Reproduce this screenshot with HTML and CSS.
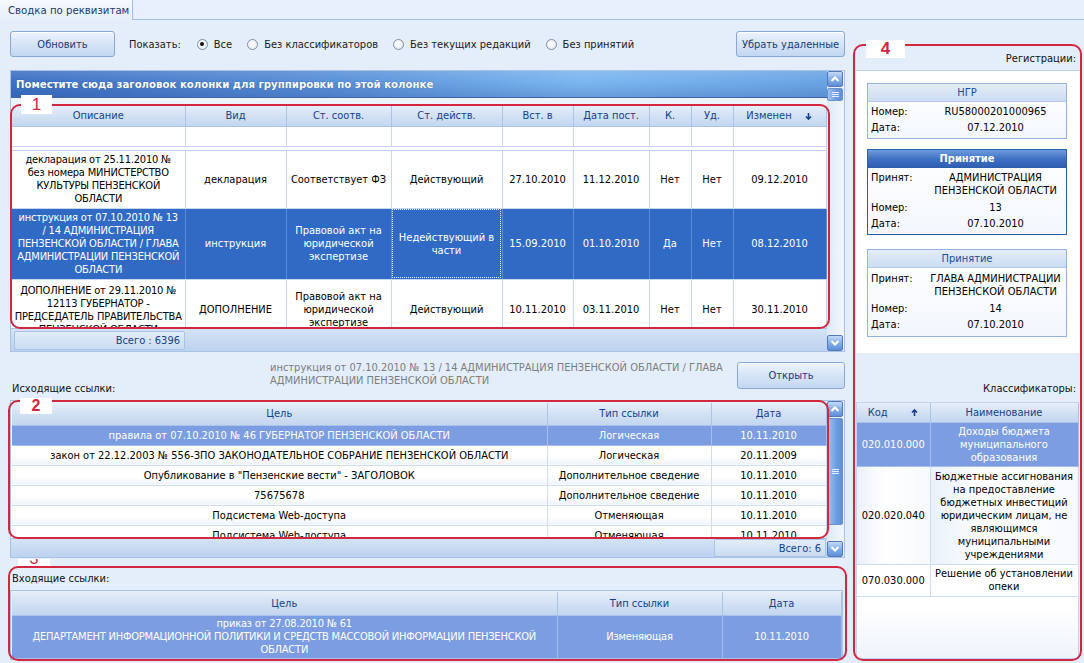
FILE: index.html
```html
<!DOCTYPE html>
<html lang="ru">
<head>
<meta charset="utf-8">
<title>Сводка по реквизитам</title>
<link rel="stylesheet" href="styles.css">
</head>
<body>
<div class="tabs"><div class="tab">Сводка по реквизитам</div></div>
<div class="page">
  <div class="left">
    <div class="toolbar">
      <button class="btn btn-refresh">Обновить</button>
      <span class="show-label">Показать:</span>
      <label class="radio"><span class="rb on"></span>Все</label>
      <label class="radio"><span class="rb"></span>Без классификаторов</label>
      <label class="radio"><span class="rb"></span>Без текущих редакций</label>
      <label class="radio"><span class="rb"></span>Без принятий</label>
      <button class="btn btn-remove">Убрать удаленные</button>
    </div>

    <div class="grid grid1">
      <div class="gmain">
        <div class="group-panel">Поместите сюда заголовок колонки для группировки по этой колонке</div>
        <div class="gap8"></div>
        <div class="viewport v1">
          <table class="tbl t1">
            <colgroup><col class="c1"><col class="c2"><col class="c3"><col class="c4"><col class="c5"><col class="c6"><col class="c7"><col class="c8"><col class="c9"></colgroup>
            <tr class="hdr"><th>Описание</th><th>Вид</th><th>Ст. соотв.</th><th>Ст. действ.</th><th>Вст. в</th><th>Дата пост.</th><th>К.</th><th>Уд.</th><th><span class="sort-h">Изменен<svg class="sort-ic" width="9" height="9" viewBox="0 0 9 9"><path d="M4.5 1v6M2 4.5l2.5 2.5 2.5-2.5" fill="none" stroke="#15428b" stroke-width="1.6"/></svg></span></th></tr>
            <tr class="filter"><td></td><td></td><td></td><td></td><td></td><td></td><td></td><td></td><td></td></tr>
            <tr class="sep"><td colspan="9"></td></tr>
            <tr class="r1"><td class="desc">декларация от 25.11.2010 №<br>без номера МИНИСТЕРСТВО<br>КУЛЬТУРЫ ПЕНЗЕНСКОЙ<br>ОБЛАСТИ</td><td>декларация</td><td>Соответствует ФЗ</td><td>Действующий</td><td>27.10.2010</td><td>11.12.2010</td><td>Нет</td><td>Нет</td><td>09.12.2010</td></tr>
            <tr class="r2 sel"><td class="desc">инструкция от 07.10.2010 № 13<br>/ 14 АДМИНИСТРАЦИЯ<br>ПЕНЗЕНСКОЙ ОБЛАСТИ / ГЛАВА<br>АДМИНИСТРАЦИИ ПЕНЗЕНСКОЙ<br>ОБЛАСТИ</td><td>инструкция</td><td>Правовой акт на юридической экспертизе</td><td class="focus">Недействующий в части</td><td>15.09.2010</td><td>01.10.2010</td><td>Да</td><td>Нет</td><td>08.12.2010</td></tr>
            <tr class="r3"><td class="desc">ДОПОЛНЕНИЕ от 29.11.2010 №<br>12113 ГУБЕРНАТОР -<br>ПРЕДСЕДАТЕЛЬ ПРАВИТЕЛЬСТВА<br>ПЕНЗЕНСКОЙ ОБЛАСТИ</td><td>ДОПОЛНЕНИЕ</td><td>Правовой акт на юридической экспертизе</td><td>Действующий</td><td>10.11.2010</td><td>03.11.2010</td><td>Нет</td><td>Нет</td><td>30.11.2010</td></tr>
          </table>
        </div>
        <div class="gfooter f1"><div class="total t-left">Всего : 6396</div></div>
      </div>
      <div class="vscroll s1">
        <div class="sbtn"><svg width="14" height="14" viewBox="0 0 14 14"><path d="M3.5 9l3.5-3.5 3.5 3.5" fill="none" stroke="#fff" stroke-width="2"/></svg></div>
        <div class="thumb small"><span class="grip"></span></div>
        <div class="track"></div>
        <div class="sbtn"><svg width="14" height="14" viewBox="0 0 14 14"><path d="M3.5 5l3.5 3.5 3.5-3.5" fill="none" stroke="#fff" stroke-width="2"/></svg></div>
      </div>
    </div>

    <div class="info-row">
      <div class="out-label">Исходящие ссылки:</div>
      <div class="info-text">инструкция от 07.10.2010 № 13 / 14 АДМИНИСТРАЦИЯ ПЕНЗЕНСКОЙ ОБЛАСТИ / ГЛАВА АДМИНИСТРАЦИИ ПЕНЗЕНСКОЙ ОБЛАСТИ</div>
      <button class="btn btn-open">Открыть</button>
    </div>

    <div class="grid grid2">
      <div class="gmain">
        <div class="viewport v2">
          <table class="tbl t2">
            <colgroup><col class="d1"><col class="d2"><col class="d3"></colgroup>
            <tr class="hdr"><th>Цель</th><th>Тип ссылки</th><th>Дата</th></tr>
            <tr class="lsel"><td>правила от 07.10.2010 № 46 ГУБЕРНАТОР ПЕНЗЕНСКОЙ ОБЛАСТИ</td><td>Логическая</td><td>10.11.2010</td></tr>
            <tr class="lr"><td>закон от 22.12.2003 № 556-ЗПО ЗАКОНОДАТЕЛЬНОЕ СОБРАНИЕ ПЕНЗЕНСКОЙ ОБЛАСТИ</td><td>Логическая</td><td>20.11.2009</td></tr>
            <tr class="lr"><td>Опубликование в "Пензенские вести" - ЗАГОЛОВОК</td><td>Дополнительное сведение</td><td>10.11.2010</td></tr>
            <tr class="lr"><td>75675678</td><td>Дополнительное сведение</td><td>10.11.2010</td></tr>
            <tr class="lr"><td>Подсистема Web-доступа</td><td>Отменяющая</td><td>10.11.2010</td></tr>
            <tr class="lr"><td>Подсистема Web-доступа</td><td>Отменяющая</td><td>10.11.2010</td></tr>
          </table>
        </div>
        <div class="gfooter f2"><div class="total t-right">Всего: 6</div></div>
      </div>
      <div class="vscroll s2">
        <div class="sbtn"><svg width="14" height="14" viewBox="0 0 14 14"><path d="M3.5 9l3.5-3.5 3.5 3.5" fill="none" stroke="#fff" stroke-width="2"/></svg></div>
        <div class="thumb big"><span class="grip"></span></div>
        <div class="track"></div>
        <div class="sbtn"><svg width="14" height="14" viewBox="0 0 14 14"><path d="M3.5 5l3.5 3.5 3.5-3.5" fill="none" stroke="#fff" stroke-width="2"/></svg></div>
      </div>
    </div>

    <div class="sec3">
      <div class="in-label">Входящие ссылки:</div>
      <div class="grid3">
        <table class="tbl t3">
          <colgroup><col class="e1"><col class="e2"><col class="e3"></colgroup>
          <tr class="hdr"><th>Цель</th><th>Тип ссылки</th><th>Дата</th></tr>
          <tr class="lsel tall"><td>приказ от 27.08.2010 № 61<br>ДЕПАРТАМЕНТ ИНФОРМАЦИОННОЙ ПОЛИТИКИ И СРЕДСТВ МАССОВОЙ ИНФОРМАЦИИ ПЕНЗЕНСКОЙ ОБЛАСТИ</td><td>Изменяющая</td><td>10.11.2010</td></tr>
        </table>
      </div>
    </div>
  </div>

  <div class="right">
    <div class="reg-title">Регистрации:</div>
    <div class="reg-area">
      <div class="card">
        <div class="card-h">НГР</div>
        <div class="card-b">
          <div class="kv"><span class="k">Номер:</span><span class="v">RU58000201000965</span></div>
          <div class="kv"><span class="k">Дата:</span><span class="v">07.12.2010</span></div>
        </div>
      </div>
      <div class="card active">
        <div class="card-h">Принятие</div>
        <div class="card-b">
          <div class="kv two"><span class="k">Принят:</span><span class="v">АДМИНИСТРАЦИЯ ПЕНЗЕНСКОЙ ОБЛАСТИ</span></div>
          <div class="kv"><span class="k">Номер:</span><span class="v">13</span></div>
          <div class="kv"><span class="k">Дата:</span><span class="v">07.10.2010</span></div>
        </div>
      </div>
      <div class="card c3">
        <div class="card-h">Принятие</div>
        <div class="card-b">
          <div class="kv two"><span class="k">Принят:</span><span class="v">ГЛАВА АДМИНИСТРАЦИИ ПЕНЗЕНСКОЙ ОБЛАСТИ</span></div>
          <div class="kv"><span class="k">Номер:</span><span class="v">14</span></div>
          <div class="kv"><span class="k">Дата:</span><span class="v">07.10.2010</span></div>
        </div>
      </div>
    </div>
    <div class="cls-title">Классификаторы:</div>
    <div class="cls-grid">
      <table class="tbl t4">
        <colgroup><col class="k1"><col class="k2"></colgroup>
        <tr class="hdr"><th><span class="sort-h">Код<svg class="sort-ic up" width="9" height="9" viewBox="0 0 9 9"><path d="M4.5 8V2M2 4.5l2.5-2.5 2.5 2.5" fill="none" stroke="#15428b" stroke-width="1.6"/></svg></span></th><th>Наименование</th></tr>
        <tr class="lsel kr1"><td>020.010.000</td><td>Доходы бюджета муниципального образования</td></tr>
        <tr class="kr2"><td>020.020.040</td><td>Бюджетные ассигнования на предоставление бюджетных инвестиций юридическим лицам, не являющимся муниципальными учреждениями</td></tr>
        <tr class="kr3"><td>070.030.000</td><td>Решение об установлении опеки</td></tr>
      </table>
    </div>
  </div>
</div>

<div class="ann a1"></div>
<div class="ann a2"></div>
<div class="ann a3"></div>
<div class="ann a4"></div>
<div class="lbl l1">1</div>
<div class="lbl l2">2</div>
<div class="lbl l3"><span>3</span></div>
<div class="lbl l4">4</div>
</body>
</html>
```
FILE: styles.css
```css
* { box-sizing: border-box; }
html, body { margin: 0; padding: 0; }
body {
  width: 1084px; height: 663px; overflow: hidden; position: relative;
  background: #e4eefa;
  font-family: "DejaVu Sans Condensed", "DejaVu Sans", "Liberation Sans", sans-serif;
  font-stretch: condensed;
  font-size: 11px; color: #000;
}
.tabs { height: 20px; border-bottom: 1px solid #a5bfe3; background: #e8f0fb; display: flex; }
.tab {
  width: 133px; height: 20px; padding: 4px 0 0 8px;
  background: linear-gradient(#f6f9fd, #e6effa);
  border-right: 1px solid #a5bfe3; color: #1b3a6e; font-size: 11.3px;
}
.page { display: flex; }
.left { margin-left: 10px; width: 835px; }

/* toolbar */
.toolbar { display: flex; align-items: center; height: 26px; margin-top: 11px; }
.btn {
  height: 26px; border: 1px solid #8ba8d2; border-radius: 3px;
  background: linear-gradient(#edf4fd, #d6e4f7 50%, #c3d7f2);
  color: #1c3a78; font-family: inherit; font-stretch: condensed; font-size: 11px; padding: 0;
  box-shadow: inset 0 1px 0 #fff;
}
.btn-refresh { width: 105px; }
.btn-remove { width: 109px; margin-left: auto; }
.btn-open { width: 108px; height: 27px; margin-top: 1px; }
.show-label { margin-left: 14px; color: #1a1a1a; }
.radio { display: flex; align-items: center; margin-left: 15px; color: #1a1a1a; }
.radio:first-of-type { margin-left: 16px; }
.rb {
  width: 11px; height: 11px; border-radius: 50%; border: 1px solid #7d8ea8;
  background: radial-gradient(circle at 40% 40%, #fff, #dfe6ef);
  margin-right: 6px; position: relative;
}
.rb.on::after {
  content: ""; position: absolute; left: 2.5px; top: 2.5px; width: 4px; height: 4px;
  border-radius: 50%; background: #111;
}

/* grids */
.grid { display: flex; border: 1px solid #a9c3e6; background: #eaf2fc; }
.grid1 { margin-top: 13px; height: 282px; }
.gmain { width: 816px; display: flex; flex-direction: column; }
.group-panel {
  height: 27px; line-height: 27px; padding-left: 5px;
  color: #fff; font-weight: bold; font-size: 11.3px;
  text-shadow: 0 0 1px #2a4f8f;
  background:
    linear-gradient(rgba(255,255,255,0.12), rgba(0,0,0,0) 45%, rgba(20,50,120,0.18)),
    linear-gradient(to right, #3d70c3, #5a90d8 40%, #7bb6f0 70%, #6aa3e4);
  border-bottom: 1px solid #3d66a8;
}
.gap8 { height: 8px; background: #edf3fc; }
.viewport { overflow: hidden; background: #fff; }
.v1 { height: 222px; padding-left: 1px; background: #fff; }
.tbl { border-collapse: collapse; table-layout: fixed; }
.tbl th, .tbl td { padding: 0 3px; text-align: center; vertical-align: middle; line-height: 13px; overflow: hidden; }
.tbl .hdr th {
  font-weight: normal; color: #15428b; height: 20px;
  background: linear-gradient(#e6eef9, #d2e1f4 50%, #c3d6ef);
  border-right: 1px solid #a9c4e8; border-bottom: 1px solid #a9c4e8;
}
.t1 { width: 814px; }
.c1 { width: 173px; } .c2 { width: 101px; } .c3 { width: 105px; } .c4 { width: 111px; }
.c5 { width: 71px; } .c6 { width: 76px; } .c7 { width: 42px; } .c8 { width: 42px; } .c9 { width: 93px; }
.t1 td { border-right: 1px solid #c6d7ef; border-bottom: 1px solid #c6d7ef; }
.t1 td.desc { padding: 0 1px; letter-spacing: -0.2px; white-space: nowrap; }
.t1 .filter td { height: 20px; background: #fff; }
.t1 .sep td { height: 4px; padding: 0; background: #fff; border-top: 1px solid #b9cfec; border-bottom: 1px solid #b9cfec; }
.t1 .r1 td { height: 58px; }
.t1 .r2 td { height: 71px; }
.t1 .r3 td { height: 62px; vertical-align: top; padding-top: 4px; }
.t1 .r3 td:nth-child(2), .t1 .r3 td:nth-child(n+4) { padding-top: 23px; }
.t1 .r3 td:nth-child(3) { padding-top: 10px; }
.sel td { background: #316ac5; color: #fff; border-right-color: #5c8ad6 !important; }
.sel td.focus { outline: 1px dotted #e8eefc; outline-offset: -2px; }
.sort-h { display: inline-flex; align-items: center; gap: 12px; }
.sort-ic { margin-top: 1px; }

.gfooter { background: linear-gradient(#d4e3f6, #bcd2ef); border-top: 1px solid #a9c3e6; }
.f1 { height: 23px; padding: 2px 0 0 3px; }
.total {
  height: 19px; line-height: 18px; text-align: right; padding-right: 4px;
  color: #15428b;
  border: 1px solid #a9c3e6; border-radius: 2px;
  background: linear-gradient(#e2ecf9, #cadcf2);
}
.t-left { width: 171px; }
.t-right { width: 112px; margin-left: auto; margin-right: 1px; }

.vscroll { width: 16px; display: flex; flex-direction: column; background: linear-gradient(to right, #dfe9f7, #f2f7fd); }
.sbtn {
  width: 16px; height: 16px; border: 1px solid #5679b6; border-radius: 2px;
  background: linear-gradient(#c3dbf7, #8ab3ea 45%, #5d8fd8);
  display: flex; align-items: center; justify-content: center;
}
.thumb {
  border: 1px solid #6b91cc; border-radius: 2px; margin-top: 1px;
  background: linear-gradient(to right, #9fc1ee, #6d9de0 60%, #5f8fd6);
  display: flex; align-items: center; justify-content: center;
}
.thumb.small { height: 13px; }
.thumb.big { height: 107px; }
.grip { width: 7px; height: 5px; border-top: 1px solid #e6efff; border-bottom: 1px solid #e6efff; position: relative; }
.grip::after { content: ""; position: absolute; left: 0; right: 0; top: 1px; border-top: 1px solid #e6efff; }
.track { flex: 1; }

/* info row */
.info-row { display: flex; height: 48px; padding-top: 9px; }
.out-label { width: 260px; align-self: flex-end; padding: 0 0 5px 2px; line-height: 13px; color: #111; }
.info-text { width: 465px; color: #7d7d7d; line-height: 13px; }
.btn-open { margin-left: auto; }

.grid2 { height: 158px; }
.grid2 .gmain { padding-top: 2px; }
.v2 { height: 135px; padding-left: 1px; flex: none; }
.t2 { width: 814px; }
.d1 { width: 535px; } .d2 { width: 164px; } .d3 { width: 115px; }
.t2 .hdr th { height: 22px; }
.t2 td, .t3 td, .t4 td { border-right: 1px solid #d0dcef; border-bottom: 1px solid #d0dcef; }
.lr td { height: 20px; background: linear-gradient(#ffffff, #ffffff 60%, #eef3fb); }
.lsel td { height: 20px; background: #7c9de1; color: #fff; border-right-color: #a7bdea; border-bottom-color: #a7bdea; }
.f2 { height: 19px; padding: 0; display: flex; flex: none; }
.f2 .total { height: 18px; }

/* section 3 */
.sec3 { margin-top: 8px; padding-top: 6px; }
.in-label { line-height: 13px; padding-left: 2px; color: #111; }
.grid3 { margin-top: 5px; width: 833px; height: 70px; border: 1px solid #a9c3e6; background: #eaf2fc; padding: 1px 1px 0 1px; }
.t3 { width: 829px; }
.e1 { width: 545px; } .e2 { width: 165px; } .e3 { width: 119px; }
.t3 td { letter-spacing: -0.2px; }
.t3 td:first-child { padding: 0 12px; }
.t3 .hdr th { height: 23px; }
.t3 .tall td { height: 43px; }

/* right panel */
.right { margin-left: 7px; width: 230px; }
.reg-title, .cls-title { text-align: right; padding-right: 6px; line-height: 13px; color: #111; }
.reg-title { margin-top: 32px; }
.reg-area {
  margin: 5px 0 0 4px; width: 224px; height: 283px; background: #fff;
  border-top: 1px solid #bcd0ea; padding: 12px 0 0 11px;
}
.card { width: 200px; border: 1px solid #94b4df; background: linear-gradient(#fff, #f3f7fd); margin-bottom: 10px; }
.card.active { border-color: #2e5ea8; margin-bottom: 14px; }
.card-h {
  height: 18px; line-height: 17px; text-align: center; color: #1e4b9a;
  background: linear-gradient(#e4edf9, #cbdcf2);
  border-bottom: 1px solid #b5cbea;
}
.card.active .card-h { color: #fff; font-weight: bold; background: linear-gradient(#6f9de0, #3d6fc2 55%, #2f5fb2); border-bottom-color: #2e5ea8; }
.card-b { padding: 2px 0 2px 3px; }
.kv { display: flex; line-height: 16px; }
.kv .k { width: 58px; flex: none; }
.kv .v { flex: 1; text-align: center; padding-right: 4px; }
.kv.two { line-height: 13px; padding: 1px 0 3px; }
.card.c3 .card-b { padding-top: 3px; padding-bottom: 3px; }
.card.c3 .kv.two { padding-bottom: 3px; }

.cls-title { margin-top: 29px; }
.cls-grid { margin: 7px 0 0 4px; width: 223px; height: 257px; background: linear-gradient(#fff 80%, #eef3fb); border: 1px solid #c3d5ee; }
.t4 { width: 221px; }
.k1 { width: 73px; } .k2 { width: 148px; }
.t4 .hdr th { height: 19px; }
.t4 .kr1 td { height: 44px; }
.t4 .kr2 td { height: 98px; background: linear-gradient(to right, #eaf1fb, #fff 40%, #f6f9fd); }
.t4 .kr3 td { height: 32px; background: #fff; }
.t4 .sort-h { gap: 22px; }

/* annotations */
.ann { position: absolute; border: 2px solid #d3263f; border-radius: 10px; pointer-events: none; }
.a1 { left: 10px; top: 104px; width: 820px; height: 225px; }
.a2 { left: 8px; top: 400px; width: 821px; height: 139px; }
.a3 { left: 8px; top: 566px; width: 839px; height: 95px; }
.a4 { left: 853px; top: 44px; width: 229px; height: 617px; }
.lbl { position: absolute; background: #fff; color: #d3263f; text-align: center; font-family: "Liberation Sans", Arial, sans-serif; font-stretch: normal; }
.l1 { left: 21px; top: 95px; width: 31px; height: 19px; font-size: 17px; line-height: 19px; }
.l2 { left: 20px; top: 398px; width: 32px; height: 16px; font-size: 16px; font-weight: bold; line-height: 16px; }
.l3 { left: 18px; top: 559px; width: 32px; height: 7px; overflow: hidden; font-size: 16px; }
.l3 span { display: block; line-height: 16px; margin-top: -8px; }
.l4 { left: 866px; top: 40px; width: 39px; height: 18px; font-size: 17px; font-weight: bold; line-height: 18px; }
```
